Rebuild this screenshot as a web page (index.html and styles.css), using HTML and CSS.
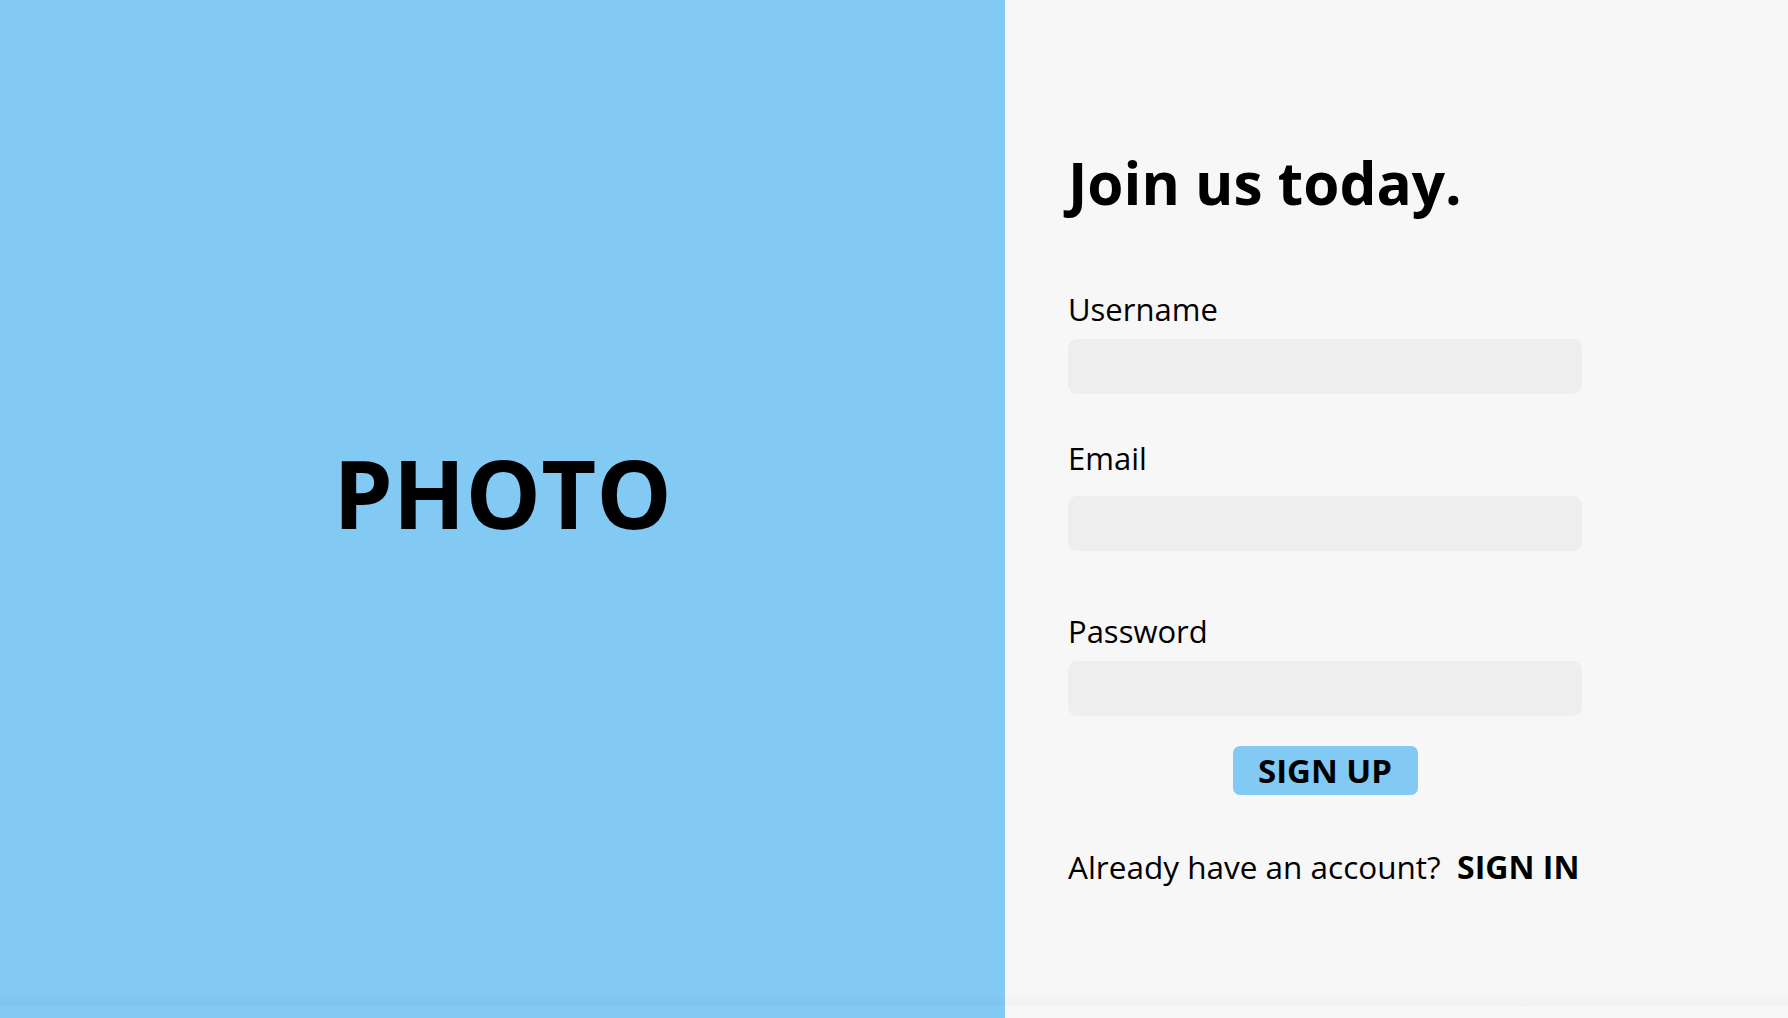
FILE: index.html
```
<!DOCTYPE html>
<html>
<head>
<meta charset="utf-8">
<link rel="stylesheet" href="styles.css">
</head>
<body>
<div class="page">
  <div class="photo">
    <span class="photo-text">PHOTO</span>
  </div>
  <div class="side">
    <h1 class="title">Join us today.</h1>
    <form class="form">
      <label class="label label-user">Username</label>
      <div class="input input-user"></div>
      <label class="label label-email">Email</label>
      <div class="input input-email"></div>
      <label class="label label-pass">Password</label>
      <div class="input input-pass"></div>
      <div class="btn-row"><span class="btn">SIGN UP</span></div>
      <p class="already">Already have an account?&nbsp; <b class="signin">SIGN IN</b></p>
    </form>
  </div>
</div>
</body>
</html>
```

FILE: styles.css
```
html, body {
  margin: 0;
  padding: 0;
}
body {
  font-family: "Open Sans", "Liberation Sans", sans-serif;
  background: #f7f7f7;
  color: #000;
}
.page {
  position: relative;
  display: flex;
  width: 1788px;
  height: 1018px;
  overflow: hidden;
}
.page::after {
  content: "";
  position: absolute;
  left: 0;
  right: 0;
  top: 992px;
  height: 14px;
  background: linear-gradient(to bottom, rgba(0,0,0,0), rgba(0,0,0,0.025));
  pointer-events: none;
}
.photo {
  width: 1005px;
  flex: none;
  background: #82c9f4;
  display: flex;
  align-items: center;
  justify-content: center;
  padding-bottom: 34px;
  box-sizing: border-box;
}
.photo-text {
  font-size: 95px;
  font-weight: 700;
}
.side {
  flex: 1;
  padding-left: 63px;
  padding-top: 143px;
  box-sizing: border-box;
}
.title {
  margin: 0;
  font-size: 58.5px;
  font-weight: 700;
  line-height: 79px;
}
.form {
  width: 514px;
  display: flex;
  flex-direction: column;
}
.label {
  display: block;
  font-size: 31px;
  line-height: 41px;
}
.label-user { margin-top: 67px; }
.label-email { margin-top: 44px; }
.label-pass { margin-top: 60px; }
.input {
  height: 55px;
  background: #eeeeee;
  border-radius: 9px;
}
.input-user { margin-top: 9px; }
.input-email { margin-top: 17px; }
.input-pass { margin-top: 9px; }
.btn-row {
  display: flex;
  justify-content: center;
  margin-top: 30px;
}
.btn {
  width: 185px;
  height: 49px;
  background: #82c9f4;
  border-radius: 7px;
  font-size: 33px;
  font-weight: 700;
  display: flex;
  align-items: center;
  justify-content: center;
  line-height: 45px;
}
.already {
  margin: 50px 0 0;
  font-size: 31.5px;
  line-height: 43px;
  white-space: nowrap;
}
.signin {
  font-weight: 700;
  font-size: 32px;
}
```
